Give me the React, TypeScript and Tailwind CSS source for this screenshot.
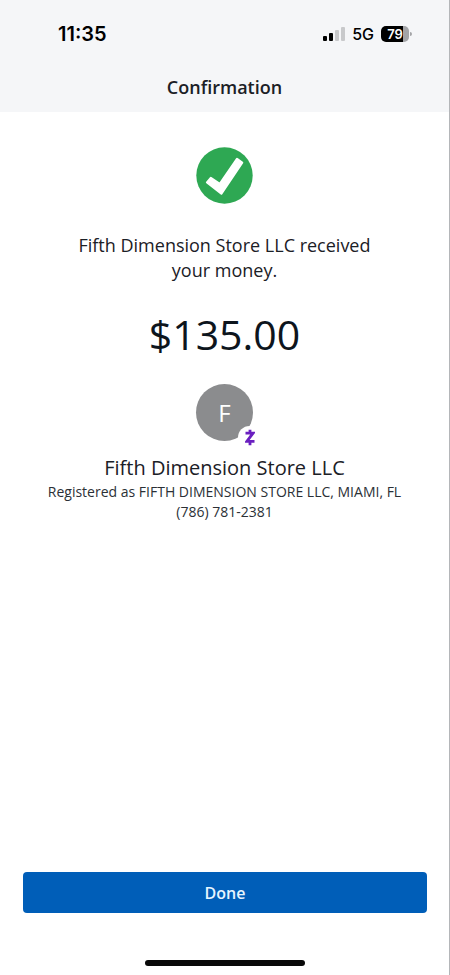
import React from "react";

function SignalIcon() {
  return (
    <svg width="22" height="14" viewBox="0 0 22 14" aria-hidden="true">
      <rect x="0" y="9" width="4" height="5" rx="1" fill="#000" />
      <rect x="6" y="6" width="4" height="8" rx="1" fill="#000" />
      <rect x="12" y="3" width="4" height="11" rx="1" fill="#c8c9cb" />
      <rect x="18" y="0" width="4" height="14" rx="1" fill="#c8c9cb" />
    </svg>
  );
}

function Battery({ level }: { level: number }) {
  return (
    <div className="flex items-center gap-px">
      <div className="flex h-4 w-7 justify-center overflow-hidden rounded-[5px] bg-[linear-gradient(to_right,#000_79%,#a4a5a8_79%)] text-[13px] leading-4 font-semibold text-white">
        {level}
      </div>
      <span className="h-1 w-0.5 rounded-r-full bg-[#a4a5a8]" />
    </div>
  );
}

function SuccessIcon() {
  return (
    <svg width="57" height="57" viewBox="0 0 57 57" role="img" aria-label="Success">
      <circle cx="28.5" cy="28.5" r="28.2" fill="#2ea853" />
      <path
        d="M11 35.4 L14.8 31 L23.8 36.8 L41 12 L46.2 15.6 L25.4 46.6 Z"
        fill="#fff"
        stroke="#fff"
        strokeWidth="2.2"
        strokeLinejoin="round"
      />
    </svg>
  );
}

function ZelleBadge() {
  return (
    <span className="absolute left-[42px] top-[42px] flex size-[23px] items-center justify-center rounded-full bg-white">
      <svg width="10" height="17" viewBox="0 0 10 17" role="img" aria-label="Zelle">
        <path
          d="M0.5 4.2 H8 L1.8 12.4 H9.5 M5 0.8 V4 M5 12.6 V16.2"
          fill="none"
          stroke="#6a1fc0"
          strokeWidth="2.8"
        />
      </svg>
    </span>
  );
}

export default function App() {
  return (
    <div className="flex min-h-screen flex-col border-r border-[#b4b6b9] bg-white font-['Open_Sans','Noto_Sans',sans-serif] text-[#1b2026]">
      <header className="bg-[#f5f6f8]">
        <div className="flex h-[62px] items-center justify-between pt-1.5 pr-[37px] pl-[58px] font-['Inter','Liberation_Sans',sans-serif] text-black">
          <time className="text-xl leading-6 font-semibold">11:35</time>
          <div className="flex items-center gap-[7px]">
            <SignalIcon />
            <span className="text-base leading-5 font-medium">5G</span>
            <Battery level={79} />
          </div>
        </div>
        <h1 className="h-[50px] text-center text-lg leading-[50px] font-semibold">
          Confirmation
        </h1>
      </header>

      <main className="flex flex-1 flex-col items-center px-6 pt-[35px] text-center">
        <SuccessIcon />
        <p className="mt-[29px] max-w-80 text-lg leading-[25px]">
          Fifth Dimension Store LLC received your money.
        </p>
        <p className="mt-[26px] text-[41px] leading-[50px] text-[#0d151d]">$135.00</p>
        <div className="relative mt-[25px] flex size-[57px] items-center justify-center rounded-full bg-[#8b8c8e] text-2xl text-white">
          F
          <ZelleBadge />
        </div>
        <h2 className="mt-[15px] text-xl leading-6">Fifth Dimension Store LLC</h2>
        <p className="mt-0.5 text-sm leading-5 text-[#2b3036]">
          Registered as FIFTH DIMENSION STORE LLC, MIAMI, FL
        </p>
        <p className="text-sm leading-5 text-[#2b3036]">(786) 781-2381</p>
      </main>

      <footer className="flex flex-col items-center pr-[22px] pb-[9px] pl-[23px]">
        <button
          type="button"
          className="h-[41px] w-full rounded bg-[#005eb8] text-base font-semibold text-[#e6f5ff]"
        >
          Done
        </button>
        <div className="mt-[47px] h-1.5 w-40 rounded-full bg-[#080808]" />
      </footer>
    </div>
  );
}
